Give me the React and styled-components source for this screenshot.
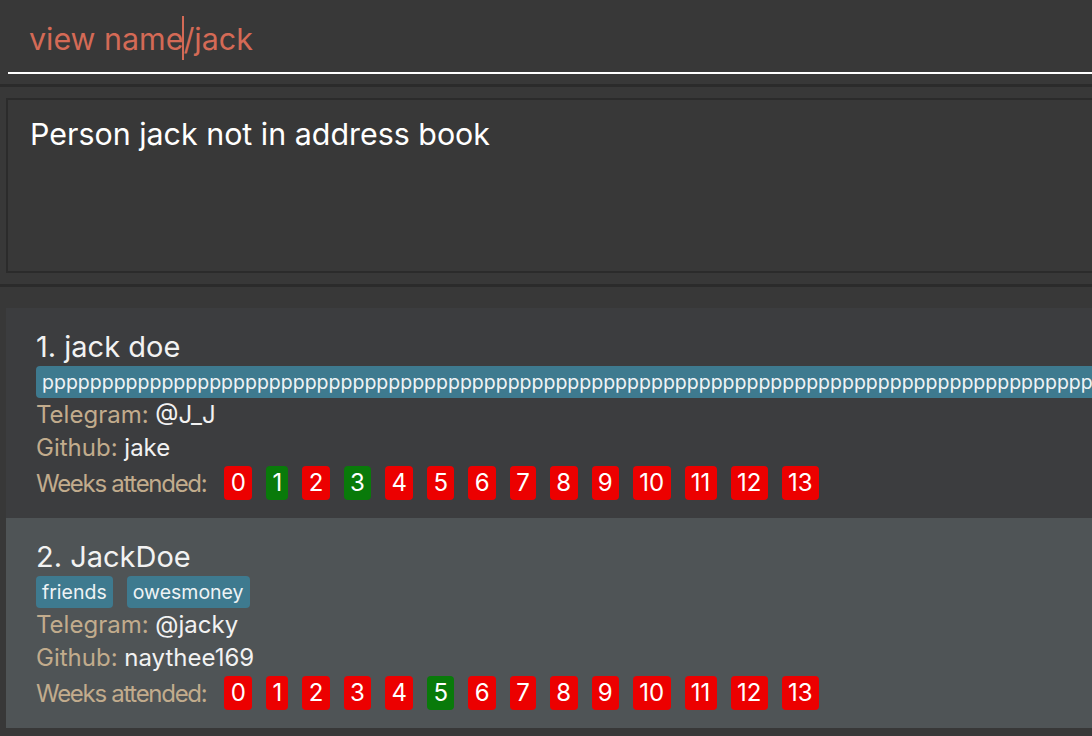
import React from "react";
import styled, { createGlobalStyle } from "styled-components";

const GlobalStyle = createGlobalStyle`
  html, body {
    margin: 0;
    padding: 0;
    background: #383838;
    overflow: hidden;
  }
  body {
    font-family: Inter, "Noto Sans", sans-serif;
  }
`;

const Window = styled.div`
  width: 1092px;
  height: 736px;
  background: #383838;
  overflow: hidden;
`;

const CommandBar = styled.div`
  padding-left: 8px;
`;

const CommandInput = styled.div`
  border-bottom: 2px solid #ffffff;
  padding: 19px 0 13px 21px;
  font-size: 30.4px;
  line-height: 40px;
  color: #d46a56;
  white-space: nowrap;
`;

/* text caret: zero-size anchor so it never grows the line box */
const Caret = styled.span`
  position: relative;
  display: inline-block;
  width: 0;
  height: 0;
  &::after {
    content: "";
    position: absolute;
    left: -1px;
    bottom: -10px;
    width: 2px;
    height: 44px;
    background: #d46a56;
  }
`;

const Divider = styled.div`
  height: 3px;
  margin-top: ${(p) => p.$top || 0}px;
  background: #2b2b2b;
`;

const ResultPane = styled.div`
  padding: 11px 0 11px 6px;
`;

const ResultBox = styled.div`
  height: 175px;
  box-sizing: border-box;
  border: 2px solid #2b2b2b;
  border-right: none;
  padding: 14px 0 0 22px;
  font-size: 30.4px;
  line-height: 40px;
  color: #ffffff;
`;

const ListPane = styled.div`
  padding: 21px 0 0 6px;
`;

const Card = styled.div`
  background: ${(p) => p.$bg};
  padding: 20px 0 18px 30px;
  overflow: hidden;
`;

const Name = styled.div`
  font-size: 29px;
  line-height: 38px;
  color: #f2f2f2;
  white-space: nowrap;
`;

const TagRow = styled.div`
  display: flex;
  gap: 14px;
  height: 32px;
  white-space: nowrap;
`;

const Tag = styled.span`
  display: inline-block;
  height: 32px;
  padding: 0 6px;
  border-radius: 4px;
  background: #3e7a8f;
  color: #eef3f5;
  font-size: 19.5px;
  line-height: 32px;
`;

const Field = styled.div`
  font-size: 24px;
  line-height: 33px;
  color: #f2f2f2;
  white-space: nowrap;
`;

const Label = styled.span`
  color: #c2ac8d;
`;

const WeeksRow = styled.div`
  display: flex;
  align-items: center;
  gap: 14px;
  margin-top: 2px;
  font-size: 24px;
`;

const WeeksLabel = styled.span`
  color: #c2ac8d;
  letter-spacing: -1.3px;
  margin-right: 4px;
`;

const Week = styled.span`
  height: 34px;
  padding: 0 6.3px;
  border-radius: 4px;
  background: ${(p) => (p.$present ? "#097a0a" : "#ec0000")};
  color: #ffffff;
  font-size: 24px;
  line-height: 34px;
`;

const persons = [
  {
    name: "1. jack doe",
    tags: ["p".repeat(120)],
    telegram: "@J_J",
    github: "jake",
    present: [1, 3],
    bg: "#3c3d3f",
  },
  {
    name: "2. JackDoe",
    tags: ["friends", "owesmoney"],
    telegram: "@jacky",
    github: "naythee169",
    present: [5],
    bg: "#4f5456",
  },
];

const weeks = Array.from({ length: 14 }, (_, i) => i);

const PersonCard = ({ person }) => (
  <Card $bg={person.bg}>
    <Name>{person.name}</Name>
    <TagRow>
      {person.tags.map((t) => (
        <Tag key={t}>{t}</Tag>
      ))}
    </TagRow>
    <Field>
      <Label>Telegram: </Label>
      {person.telegram}
    </Field>
    <Field>
      <Label>Github: </Label>
      {person.github}
    </Field>
    <WeeksRow>
      <WeeksLabel>Weeks attended:</WeeksLabel>
      {weeks.map((w) => (
        <Week key={w} $present={person.present.includes(w)}>
          {w}
        </Week>
      ))}
    </WeeksRow>
  </Card>
);

export default function App() {
  return (
    <Window>
      <GlobalStyle />
      <CommandBar>
        <CommandInput>
          view name<Caret />/jack
        </CommandInput>
      </CommandBar>
      <Divider $top={10} />
      <ResultPane>
        <ResultBox>Person jack not in address book</ResultBox>
      </ResultPane>
      <Divider />
      <ListPane>
        {persons.map((p) => (
          <PersonCard key={p.name} person={p} />
        ))}
      </ListPane>
    </Window>
  );
}
